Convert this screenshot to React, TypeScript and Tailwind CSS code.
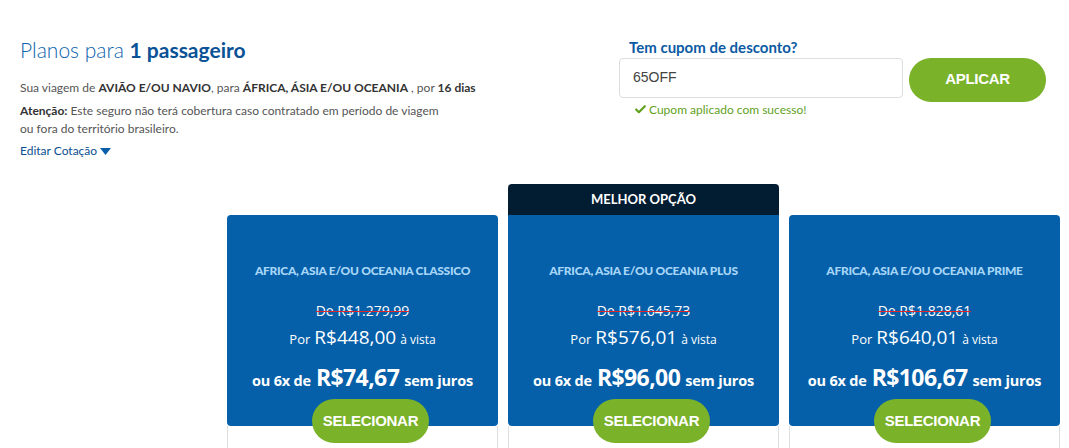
import { Check } from "lucide-react";

type Plan = {
  name: string;
  de: string;
  por: string;
  parcela: string;
  best?: boolean;
};

const plans: Plan[] = [
  { name: "AFRICA, ASIA E/OU OCEANIA CLASSICO", de: "R$1.279,99", por: "R$448,00", parcela: "R$74,67" },
  { name: "AFRICA, ASIA E/OU OCEANIA PLUS", de: "R$1.645,73", por: "R$576,01", parcela: "R$96,00", best: true },
  { name: "AFRICA, ASIA E/OU OCEANIA PRIME", de: "R$1.828,61", por: "R$640,01", parcela: "R$106,67" },
];

// One plan column: optional "best" tab on top, blue price card, white body below.
function PlanCard({ plan }: { plan: Plan }) {
  return (
    <div className="flex w-[271px] flex-col">
      {plan.best ? (
        <div className="flex h-[31px] items-center justify-center rounded-t-[4px] bg-[#021c32] text-[13px] font-bold text-white [font-family:Lato,sans-serif]">
          MELHOR OPÇÃO
        </div>
      ) : (
        <div className="h-[31px]" />
      )}
      <div
        className={`flex h-[211px] flex-col items-center bg-[#055fa9] text-white ${
          plan.best ? "rounded-b-[4px]" : "rounded-[4px]"
        }`}
      >
        <div className="mt-[47px] text-[12px] font-black tracking-[-0.3px] text-[#a6d6f7] [font-family:Lato,sans-serif]">
          {plan.name}
        </div>
        <div className="relative mt-[24px] text-[14px] leading-none text-white [font-family:'Open_Sans',sans-serif]">
          De {plan.de}
          <span className="absolute left-0 right-0 top-[7px] z-10 block h-[1px] bg-[#e0252b]" />
        </div>
        <div className="mt-[10px] flex items-baseline gap-[4px] leading-none [font-family:'Open_Sans',sans-serif]">
          <span className="text-[13px]">Por</span>
          <span className="text-[19px]">{plan.por}</span>
          <span className="text-[12px]">à vista</span>
        </div>
        <div className="mt-[19px] flex items-baseline gap-[5px] font-bold leading-none [font-family:'Open_Sans',sans-serif]">
          <span className="text-[14.5px] tracking-[-0.2px]">ou 6x de</span>
          <span className="text-[23px] tracking-[-0.6px]">{plan.parcela}</span>
          <span className="text-[14.5px] tracking-[-0.2px]">sem juros</span>
        </div>
      </div>
      <div className="relative h-[22px] border-x border-[#dddddd] bg-white">
        <button className="absolute left-[84px] top-[-27px] flex h-[44px] w-[117px] items-center justify-center rounded-full bg-[#7ab229] text-[15px] font-bold tracking-[-0.3px] text-white [font-family:'Liberation_Sans',Arial,sans-serif]">
          SELECIONAR
        </button>
      </div>
    </div>
  );
}

export default function App() {
  return (
    <div className="h-[448px] w-[1069px] overflow-hidden bg-white [font-family:Lato,sans-serif]">
      <div className="flex justify-between pl-[20px] pr-[23px] pt-[36px]">
        <div className="w-[480px]">
          <h1 className="text-[21px] font-light leading-[28px] text-[#0c63ad]">
            Planos para <span className="font-bold text-[#0a5296]">1 passageiro</span>
          </h1>
          <p className="mt-[15px] text-[12px] leading-[18px] text-[#555555]">
            Sua viagem de <b className="text-[#333]">AVIÃO E/OU NAVIO</b>, para{" "}
            <b className="text-[#333]">ÁFRICA, ÁSIA E/OU OCEANIA</b> , por{" "}
            <b className="text-[#333]">16 dias</b>
          </p>
          <p className="mt-[5px] w-[430px] text-[12px] leading-[18px] text-[#555555]">
            <b className="text-[#333]">Atenção:</b> Este seguro não terá cobertura caso contratado em período de viagem
            ou fora do território brasileiro.
          </p>
          <button className="mt-[4px] flex items-center gap-[3px] text-[12px] text-[#0a4f8f]">
            Editar Cotação
            <svg width="11" height="7" viewBox="0 0 11 7">
              <path d="M0 0h11L5.5 7z" fill="#0a5fa8" />
            </svg>
          </button>
        </div>
        <div className="w-[427px]">
          <div className="pl-[10px] text-[15px] font-bold text-[#0b5aa3]">Tem cupom de desconto?</div>
          <div className="-mt-[1px] flex gap-[6px]">
            <div className="flex h-[40px] w-[284px] items-center rounded-[4px] border border-[#dddddd] px-[13px] text-[14px] text-[#444] [font-family:'Liberation_Sans',Arial,sans-serif]">
              65OFF
            </div>
            <button className="h-[44px] w-[137px] rounded-full bg-[#7ab229] text-[15px] font-bold tracking-[-0.3px] text-white [font-family:'Liberation_Sans',Arial,sans-serif]">
              APLICAR
            </button>
          </div>
          <div className="-mt-[1px] flex items-center gap-[2px] pl-[15px] text-[12px] text-[#5fa11d]">
            <Check size={13} strokeWidth={4} />
            Cupom aplicado com sucesso!
          </div>
        </div>
      </div>
      <div className="mt-[24px] flex gap-[10px] pl-[227px]">
        {plans.map((p) => (
          <PlanCard key={p.name} plan={p} />
        ))}
      </div>
    </div>
  );
}
